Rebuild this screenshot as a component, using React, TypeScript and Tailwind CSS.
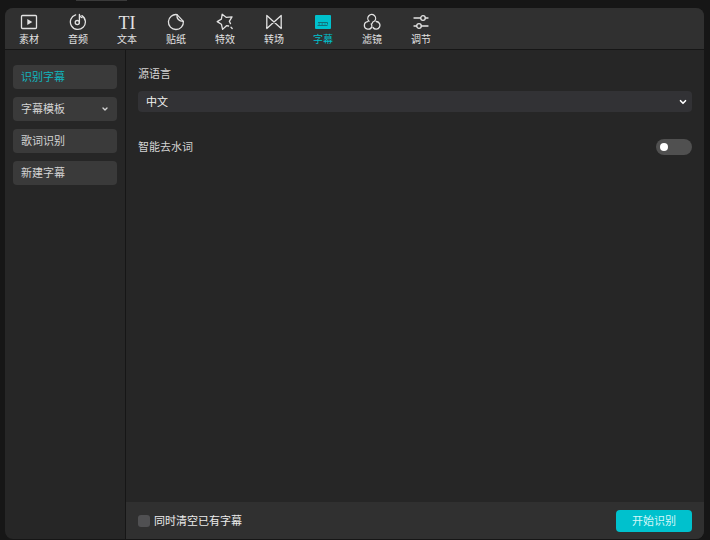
import React, { useState } from 'react';
import { ChevronDown } from 'lucide-react';
import clsx from 'clsx';

const Icon = ({ children }: { children: React.ReactNode }) => (
  <svg
    viewBox="0 0 18 18"
    className="h-[18px] w-[18px]"
    fill="none"
    stroke="currentColor"
    strokeWidth="1.3"
    strokeLinecap="round"
    strokeLinejoin="round"
    aria-hidden="true"
  >
    {children}
  </svg>
);

const tabs = [
  {
    name: '素材',
    icon: (
      <Icon>
        <rect x="1.5" y="2.5" width="15" height="13" rx="1" />
        <path d="M7.3 6v6l5-3z" fill="currentColor" stroke="none" />
      </Icon>
    ),
  },
  {
    name: '音频',
    icon: (
      <Icon>
        <path d="M6.6 1.8A7.5 7.5 0 1 0 12.9 2.6" />
        <circle cx="8.3" cy="9.6" r="2.1" />
        <path d="M10.4 9.6V1.5c.2 1.7 1 2.6 2.6 3.2" />
      </Icon>
    ),
  },
  {
    name: '文本',
    icon: (
      <span className="h-[18px] font-['Liberation_Serif',serif] text-[18px] leading-[20px]" aria-hidden="true">
        TI
      </span>
    ),
  },
  {
    name: '贴纸',
    icon: (
      <Icon>
        <path d="M10 1.6A7.5 7.5 0 1 0 16.4 8.4z" />
        <path d="M10 1.6c-.5 4 1.8 6.9 6.4 6.8" />
      </Icon>
    ),
  },
  {
    name: '特效',
    icon: (
      <Icon>
        <path d="M14.5 10.6 13.3 8.3 16 3.8 10.4 4.4 6.2 1.2 5.4 6.1 1.2 8.6 5.4 11.2 6.6 16.4 10.5 12.7 12.6 13" />
        <path d="M15 14.2l1.2 1.3" />
      </Icon>
    ),
  },
  {
    name: '转场',
    icon: (
      <Icon>
        <path d="M1.8 2.5v13l14.4-13v13z" />
      </Icon>
    ),
  },
  {
    name: '字幕',
    icon: (
      <Icon>
        <rect x="1" y="2" width="16" height="14" rx="1" fill="currentColor" stroke="none" />
        <path d="M4 9.5h9.5M3.5 12.5h10M13.5 9.5v2" stroke="#12707a" strokeWidth="1" strokeLinecap="butt" />
        <path d="M4.5 11h1.5M7.5 11h1.5M10.5 11h1" stroke="#12707a" strokeWidth="1" strokeLinecap="butt" />
      </Icon>
    ),
  },
  {
    name: '滤镜',
    icon: (
      <Icon>
        <path d="M6 8.2a3.9 3.9 0 1 1 5.6-.2q-2 .6-2.6 2.6" />
        <path d="M4.8 8.6a3.8 3.8 0 1 0 4 4.9q.3-1.4-.6-2.6" />
        <path d="M13.2 8.5a3.8 3.8 0 1 1-3.2 6" />
      </Icon>
    ),
  },
  {
    name: '调节',
    icon: (
      <Icon>
        <path d="M2 5h6.7M13.3 5H16M2 13h2.7M9.3 13H16" />
        <circle cx="11" cy="5" r="2.3" />
        <circle cx="7" cy="13" r="2.3" />
      </Icon>
    ),
  },
];

const sections = ['识别字幕', '字幕模板', '歌词识别', '新建字幕'];

const App = () => {
  const [tab, setTab] = useState('字幕');
  const [section, setSection] = useState('识别字幕');

  return (
    <div className="flex min-h-screen flex-col bg-[#161616] pr-[6px] pb-px pl-[5px] font-['Liberation_Sans','Noto_Sans_CJK_SC',sans-serif] text-[11px] leading-4 text-[#d4d4d4]">
      <div className="h-2 shrink-0">
        <div className="ml-[71px] h-px w-[51px] bg-[#3a3a3a]" />
      </div>

      <div className="flex flex-1 flex-col overflow-hidden rounded-lg bg-[#262626]">
        <nav className="flex h-[42px] shrink-0 gap-px border-b border-[#161616] bg-[#303030]">
          {tabs.map((item) => (
            <button
              key={item.name}
              type="button"
              onClick={() => setTab(item.name)}
              className={clsx(
                'flex w-12 flex-col items-center pt-[5px] text-[10px] leading-[18px]',
                tab === item.name ? 'text-[#00c1cd]' : 'text-[#e2e2e2]'
              )}
            >
              {item.icon}
              <span>{item.name}</span>
            </button>
          ))}
        </nav>

        <div className="flex flex-1">
          <aside className="flex w-[121px] shrink-0 flex-col gap-2 border-r border-[#161616] px-2 py-[15px]">
            {sections.map((name) => (
              <button
                key={name}
                type="button"
                onClick={() => setSection(name)}
                className={clsx(
                  'flex h-6 items-center justify-between rounded bg-[#3a3a3a] px-2',
                  section === name && 'text-[#10b4be]'
                )}
              >
                {name}
                {name === '字幕模板' && <ChevronDown className="h-2 w-2" strokeWidth={4} />}
              </button>
            ))}
          </aside>

          <div className="flex min-w-0 flex-1 flex-col">
            <main className="flex-1 px-3 pt-4">
              <label htmlFor="language" className="block">
                源语言
              </label>
              <div className="relative mt-[9px]">
                <select
                  id="language"
                  className="block h-[21px] w-full appearance-none rounded bg-[#323235] px-2 text-[#f2f2f2]"
                >
                  <option>中文</option>
                </select>
                <ChevronDown
                  className="pointer-events-none absolute top-[6px] right-1 h-[10px] w-[10px] text-white"
                  strokeWidth={4}
                />
              </div>
              <div className="mt-[27px] flex items-center justify-between">
                <label htmlFor="filler">智能去水词</label>
                <input
                  id="filler"
                  type="checkbox"
                  role="switch"
                  className="flex h-4 w-9 appearance-none items-center rounded-full bg-[#505050] px-1 before:h-2 before:w-2 before:rounded-full before:bg-white checked:justify-end checked:bg-[#00c1cd]"
                />
              </div>
            </main>

            <footer className="flex h-[37px] shrink-0 items-center justify-between bg-[#303030] px-3">
              <label className="flex items-center gap-1 text-[#ececec]">
                <input
                  type="checkbox"
                  className="h-3 w-3 appearance-none rounded-[3px] bg-[#505052] checked:bg-[#00c1cd]"
                />
                同时清空已有字幕
              </label>
              <button type="button" className="h-[22px] w-[76px] rounded bg-[#00c1cd] text-[#d5f7f9]">
                开始识别
              </button>
            </footer>
          </div>
        </div>
      </div>
    </div>
  );
};

export default App;
